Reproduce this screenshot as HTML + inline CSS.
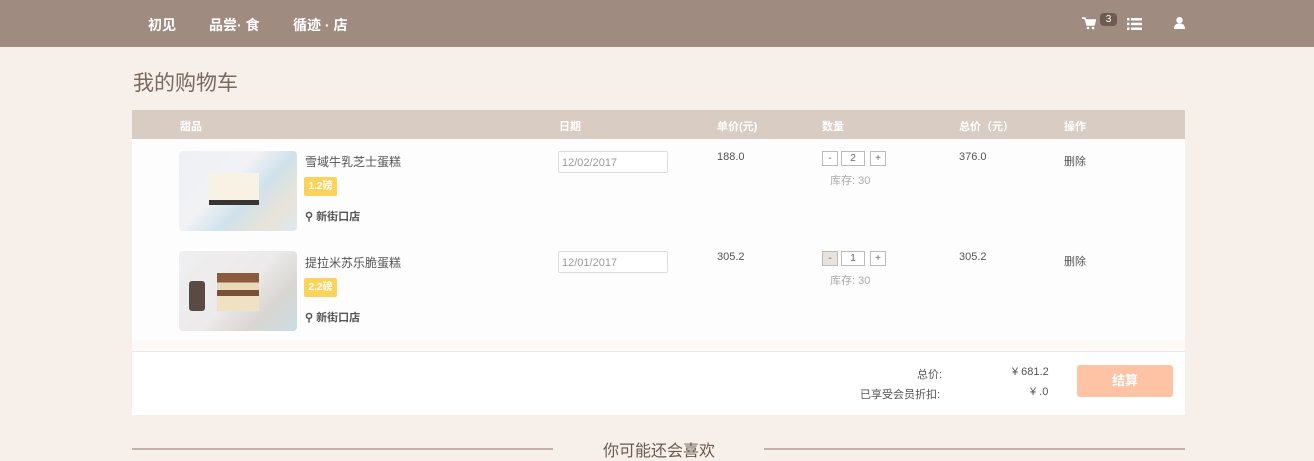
<!DOCTYPE html>
<html><head><meta charset="utf-8"><style>
*{margin:0;padding:0;box-sizing:border-box}
body{width:1314px;height:459px;overflow:hidden;background:#f7efe9;font-family:"Liberation Sans","Noto Sans CJK SC",sans-serif;position:relative;color:#555}
.nav{position:absolute;left:0;top:0;width:1314px;height:47px;background:#a08b80}
.nav a{position:absolute;top:15px;color:#fff;font-size:14px;font-weight:bold}
.t{position:absolute}
h1{position:absolute;left:133px;top:67px;font-size:21px;font-weight:normal;color:#7a6a60}
.hdr{position:absolute;left:132px;top:110px;width:1053px;height:29px;background:#d8ccc3}
.hdr span{position:absolute;top:8px;color:#fff;font-size:11px;font-weight:bold}
.row{position:absolute;left:132px;width:1053px;background:rgba(255,255,255,.88)}
.img{position:absolute;left:47px;width:118px;height:80px;border-radius:4px}
.nm{position:absolute;left:173px;font-size:12px;color:#555}
.tag{position:absolute;left:172px;width:33px;height:19px;background:#fcd35a;color:#fff;font-size:10px;text-align:center;line-height:19px;border-radius:2px;font-weight:bold}
.loc{position:absolute;left:173px;font-size:11px;color:#555;font-weight:bold}
.date{position:absolute;left:426px;width:110px;height:22px;border:1px solid #ddd;border-radius:2px;background:#fff;font-size:11px;color:#999;padding:4px 3px;line-height:14px}
.sm{position:absolute;font-size:11px;color:#555}
.qb{position:absolute;height:15px;border:1px solid #bbb;font-size:10px;text-align:center;line-height:13px;background:#fff;color:#666}
.st{position:absolute;left:698px;font-size:11px;color:#aaa}
</style></head><body>
<div class="nav">
<a style="left:148px">初见</a><a style="left:209px">品尝· 食</a><a style="left:293px">循迹 · 店</a>
<svg class="t" style="left:1082px;top:17px" width="14" height="13" viewBox="0 0 14 13"><path d="M0 1h3l2 7h7l1.5-5H4" fill="#fff" stroke="#fff" stroke-width="1.4"/><circle cx="6" cy="11" r="1.3" fill="#fff"/><circle cx="11" cy="11" r="1.3" fill="#fff"/></svg>
<div class="t" style="left:1100px;top:13px;width:17px;height:13px;background:#6e5c50;border-radius:4px;color:#fff;font-size:10px;text-align:center;line-height:13px">3</div>
<svg class="t" style="left:1127px;top:18px" width="15" height="12"><g fill="#fff"><rect x="0" y="0" width="2.5" height="2.5"/><rect x="4" y="0" width="11" height="2.5"/><rect x="0" y="4.7" width="2.5" height="2.5"/><rect x="4" y="4.7" width="11" height="2.5"/><rect x="0" y="9.5" width="2.5" height="2.5"/><rect x="4" y="9.5" width="11" height="2.5"/></g></svg>
<svg class="t" style="left:1174px;top:17px" width="11" height="12"><circle cx="5.5" cy="3.2" r="3.2" fill="#fff"/><path d="M0 12c0-4 2-5.5 5.5-5.5S11 8 11 12z" fill="#fff"/></svg>
</div>
<h1>我的购物车</h1>
<div class="hdr"><span style="left:48px">甜品</span><span style="left:427px">日期</span><span style="left:585px">单价(元)</span><span style="left:690px">数量</span><span style="left:827px">总价（元）</span><span style="left:932px">操作</span></div>
<div class="row" style="top:139px;height:101px">
<div class="img" style="top:12px;background:linear-gradient(135deg,#eef0f4 0%,#f2f2f5 40%,#cfe2ec 60%,#e8e3d8 80%,#dfe8ef 100%)"><div style="position:absolute;left:30px;top:22px;width:50px;height:32px;background:#f7f2e4;border-bottom:5px solid #3a3532"></div></div>
<div class="nm" style="top:14px">雪域牛乳芝士蛋糕</div><div class="tag" style="top:38px">1.2磅</div><div class="loc" style="top:69px">⚲ 新街口店</div>
<div class="date" style="top:12px">12/02/2017</div>
<div class="sm" style="left:585px;top:12px">188.0</div>
<div class="qb" style="left:690px;top:12px;width:16px">-</div><div class="qb" style="left:709px;top:12px;width:24px">2</div><div class="qb" style="left:738px;top:12px;width:16px">+</div>
<div class="st" style="top:33px">库存: 30</div>
<div class="sm" style="left:827px;top:12px">376.0</div><div class="sm" style="left:932px;top:14px">删除</div>
</div>
<div class="row" style="top:240px;height:100px">
<div class="img" style="top:11px;background:linear-gradient(135deg,#f0eff1 0%,#eceaea 50%,#d9d6d2 75%,#c9dde2 100%)"><div style="position:absolute;left:38px;top:22px;width:42px;height:38px;background:linear-gradient(#8a5a3c 0 25%,#e9d9b8 25% 45%,#7a5038 45% 60%,#efe1c2 60%)"></div><div style="position:absolute;left:10px;top:30px;width:16px;height:30px;background:#5a4a44;border-radius:3px"></div></div>
<div class="nm" style="top:14px">提拉米苏乐脆蛋糕</div><div class="tag" style="top:38px">2.2磅</div><div class="loc" style="top:69px">⚲ 新街口店</div>
<div class="date" style="top:11px">12/01/2017</div>
<div class="sm" style="left:585px;top:11px">305.2</div>
<div class="qb" style="left:690px;top:11px;width:16px;background:#e6e2de">-</div><div class="qb" style="left:709px;top:11px;width:24px">1</div><div class="qb" style="left:738px;top:11px;width:16px">+</div>
<div class="st" style="top:32px">库存: 30</div>
<div class="sm" style="left:827px;top:11px">305.2</div><div class="sm" style="left:932px;top:13px">删除</div>
</div>
<div class="row" style="top:340px;height:12px;background:rgba(255,255,255,.6)"></div>
<div class="row" style="top:351px;height:64px;background:#fff;border-top:1px solid #ece8e6">
<div class="sm" style="left:785px;top:14px">总价:</div><div class="sm" style="left:728px;top:34px">已享受会员折扣:</div>
<div class="sm" style="left:880px;top:14px">¥ 681.2</div><div class="sm" style="left:898px;top:34px">¥ .0</div>
<div style="position:absolute;left:945px;top:13px;width:96px;height:32px;background:#fec3a4;border-radius:3px;color:#fff;font-size:13px;font-weight:bold;text-align:center;line-height:32px">结算</div>
</div>
<div class="t" style="left:132px;top:448px;width:421px;height:2px;background:#c4b2a8"></div>
<div class="t" style="left:764px;top:448px;width:421px;height:2px;background:#c4b2a8"></div>
<div class="t" style="left:603px;top:437px;font-size:16px;color:#6a5a50">你可能还会喜欢</div>
</body></html>
